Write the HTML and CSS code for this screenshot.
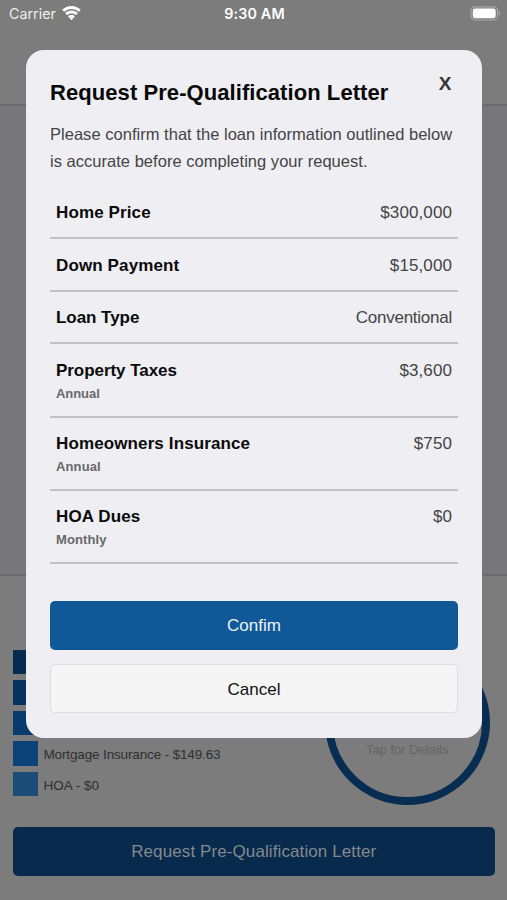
FILE: index.html
```html
<!DOCTYPE html>
<html lang="en">
<head>
<meta charset="utf-8">
<meta name="viewport" content="width=device-width, initial-scale=1">
<title>Request Pre-Qualification Letter</title>
<link rel="stylesheet" href="styles.css">
</head>
<body>
<div class="screen">
  <header class="top">
    <div class="status">
      <div class="carrier"><span>Carrier</span>
        <svg class="wifi" width="19" height="15" viewBox="0 0 19 15"><path d="M9.5 0C13.1 0 16.4 1.400 18.800 3.700L16.900 5.800C14.900 3.900 12.400 2.900 9.500 2.900S4.100 3.900 2.100 5.800L.2 3.700C2.600 1.400 5.900 0 9.500 0ZM9.500 4.500C11.900 4.500 14.200 5.400 15.900 7L13.900 9.100C12.700 8 11.200 7.400 9.500 7.400S6.300 8 5.100 9.100L3.100 7C4.800 5.400 7.100 4.500 9.500 4.500ZM9.500 9.100C10.800 9.100 12 9.600 12.900 10.400L9.500 14.200L6.100 10.400C7 9.600 8.200 9.100 9.500 9.100Z" fill="#fff"/></svg>
      </div>
      <div class="time">9:30 AM</div>
      <svg class="battery" width="31" height="15" viewBox="0 0 31 15"><rect x="1" y=".8" width="26.500" height="13.200" rx="4" fill="none" stroke="#a7a7a7" stroke-width="1.200"/><rect x="2.800" y="2.600" width="22.900" height="9.600" rx="2.200" fill="#fff"/><path d="M28.800 5.100C30.700 5.900 30.700 8.900 28.800 9.700Z" fill="#a7a7a7"/></svg>
    </div>
  </header>
  <main class="content"></main>
  <section class="summary">
    <div class="breakdown">
      <ul class="legend">
        <li><i class="swatch s1"></i></li>
        <li><i class="swatch s2"></i></li>
        <li><i class="swatch s3"></i></li>
        <li><i class="swatch s4"></i><span class="insurance">Mortgage Insurance - $149.63</span></li>
        <li><i class="swatch s5"></i><span class="hoa">HOA - $0</span></li>
      </ul>
      <div class="ring"><span>Tap for Details</span></div>
    </div>
    <div class="request"><span>Request Pre-Qualification Letter</span></div>
  </section>
  <div class="modal">
    <div class="heading"><h1>Request Pre-Qualification Letter</h1><button class="close">X</button></div>
    <p class="intro"><span class="line1">Please confirm that the loan information outlined below</span><br><span class="line2">is accurate before completing your request.</span></p>
    <dl class="rows">
      <div class="row"><dt>Home Price</dt><dd>$300,000</dd></div>
      <div class="row"><dt>Down Payment</dt><dd>$15,000</dd></div>
      <div class="row"><dt class="snug">Loan Type</dt><dd class="word">Conventional</dd></div>
      <div class="row tall"><dt class="snug">Property Taxes<small>Annual</small></dt><dd>$3,600</dd></div>
      <div class="row tall"><dt>Homeowners Insurance<small>Annual</small></dt><dd>$750</dd></div>
      <div class="row tall"><dt>HOA Dues<small>Monthly</small></dt><dd>$0</dd></div>
    </dl>
    <button class="btn confirm">Confim</button>
    <button class="btn cancel">Cancel</button>
  </div>
</div>
</body>
</html>
```
FILE: styles.css
```css
* { box-sizing: border-box; }
body { margin: 0; font-family: "Liberation Sans", Arial, sans-serif; }
button { font: inherit; border: 0; padding: 0; }
.screen { position: relative; width: 507px; height: 900px; overflow: hidden; display: flex; flex-direction: column; background: #7c7c7c; }
.top { height: 106px; border-bottom: 2px solid #6a6a6c; }
.status { display: grid; grid-template-columns: 1fr auto 1fr; align-items: center; height: 27px; padding: 0 6px 0 9px; color: #fff; }
.carrier { display: flex; align-items: center; gap: 6px; font: 14.300px/20px Inter, sans-serif; color: #eee; }
.time { font: 600 14.300px/20px Inter, sans-serif; letter-spacing: .15px; margin-right: 1px; }
.battery { justify-self: end; }
.content { height: 470px; background: #777779; border-bottom: 2px solid #6a6a6b; }
.summary { flex: 1; padding: 64px 12.500px 0 13px; }
.breakdown { display: flex; justify-content: space-between; height: 187px; }
.legend { margin: 9.500px 0 0; padding: 0; list-style: none; display: flex; flex-direction: column; gap: 6px; }
.legend li { display: flex; align-items: center; gap: 5.500px; height: 24.600px; font-size: 13.500px; color: #2f2f2f; }
.legend span { padding-top: 2px; }
.insurance { letter-spacing: -.14px; }
.swatch { width: 25px; height: 24.600px; }
.s1 { background: #052b50; }
.s2 { background: #06325d; }
.s3 { background: #073b6d; }
.s4 { background: #0b4278; }
.s5 { background: #1d4c78; }
.ring { width: 165px; height: 165px; margin-right: 5px; border: 8px solid #082d52; border-radius: 50%; text-align: center; padding-top: 94px; font-size: 13.500px; line-height: 16px; letter-spacing: -.25px; color: #656565; }
.request { height: 49px; border-radius: 5px; background: #082a4c; color: #85898d; font-size: 17px; line-height: 50px; letter-spacing: .1px; text-align: center; }
.modal { position: absolute; left: 25.500px; top: 49.700px; width: 456.800px; height: 688px; border-radius: 18px; background: #efeef3; padding: 24px 24.300px 0 24.500px; }
.heading { display: flex; justify-content: space-between; height: 47.300px; }
h1 { margin: 4px 0 0; font-size: 22px; line-height: 30px; letter-spacing: .07px; white-space: nowrap; color: #080808; }
.close { width: 14px; height: 20px; margin-right: 6px; background: none; color: #353537; font-weight: bold; font-size: 19px; line-height: 20px; }
.intro { margin: 0; font-size: 16.500px; line-height: 26.800px; letter-spacing: .025px; color: #444446; white-space: nowrap; }
.rows { margin: 12.200px 0 36.500px; }
.row { display: flex; justify-content: space-between; height: 52.500px; padding: 15.500px 6px 0; border-bottom: 2px solid #c0c0c5; font-size: 17px; line-height: 22px; }
.tall { height: 73.300px; }
dt { font-weight: bold; letter-spacing: .12px; color: #0b0b0b; }
.snug { letter-spacing: -.05px; }
dt small { display: block; font-size: 13px; line-height: 18px; margin-top: 3px; color: #68686a; }
dd { margin: 0; letter-spacing: .1px; color: #444446; }
.word { letter-spacing: -.25px; }
.btn { display: block; width: 100%; height: 49px; border-radius: 5px; font-size: 17px; padding-top: 1px; }
.confirm { background: #115898; color: #e9f1f8; margin-bottom: 14.500px; }
.cancel { background: #f5f5f6; color: #111; border: 1px solid #dddde0; padding-top: 2px; }
```
